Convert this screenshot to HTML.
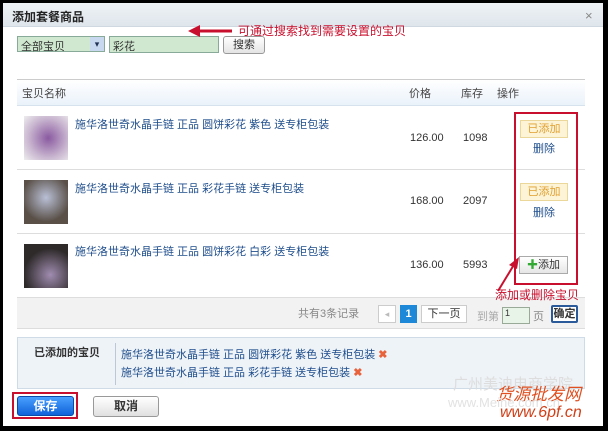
<!DOCTYPE html>
<html><head><meta charset="utf-8"><style>
*{margin:0;padding:0;box-sizing:border-box}
body{width:608px;height:431px;background:#000;position:relative;overflow:hidden;font-family:"Liberation Sans","Noto Sans CJK SC",sans-serif;font-size:11px;color:#333}
.a{position:absolute}
.lnk{color:#1f4e8c}
</style></head><body>
<div class="a" style="left:3px;top:3px;width:600px;height:423px;background:#fff"></div>
<div class="a" style="left:3px;top:3px;width:600px;height:24px;background:linear-gradient(#eef2f5,#dfe6ec);border-bottom:1px solid #cfd8e0"></div>
<div class="a" style="left:12px;top:8px;font-weight:bold;font-size:12px;color:#222">添加套餐商品</div>
<div class="a" style="left:585px;top:8px;font-size:13px;color:#888">×</div>
<!-- search -->
<div class="a" style="left:17px;top:36px;width:88px;height:16px;background:#cfe8cf;border:1px solid #8a9;"></div>
<div class="a" style="left:21px;top:38px;font-size:11px">全部宝贝</div>
<div class="a" style="left:90px;top:37px;width:14px;height:14px;background:#c8d8ef;color:#235;font-size:9px;text-align:center;line-height:14px">▾</div>
<div class="a" style="left:109px;top:36px;width:110px;height:17px;background:#cfe8cf;border:1px solid #8a9"></div>
<div class="a" style="left:113px;top:38px">彩花</div>
<div class="a" style="left:223px;top:36px;width:42px;height:18px;border:1px solid #999;border-radius:3px;background:linear-gradient(#fff,#e4e4e4);text-align:center;line-height:16px">搜索</div>
<svg class="a" style="left:188px;top:24px" width="90" height="14"><line x1="8" y1="7" x2="44" y2="7" stroke="#c8102e" stroke-width="3"/><polygon points="0,7 12,1 12,13" fill="#c8102e"/></svg>
<div class="a" style="left:238px;top:22px;color:#c8102e;font-size:12px">可通过搜索找到需要设置的宝贝</div>
<!-- table header -->
<div class="a" style="left:17px;top:79px;width:568px;height:27px;border-top:1px solid #ccc;border-bottom:1px solid #d6e2ee;background:linear-gradient(#fff,#eaf2fa)"></div>
<div class="a" style="left:22px;top:85px;color:#444">宝贝名称</div>
<div class="a" style="left:409px;top:85px;color:#444">价格</div>
<div class="a" style="left:461px;top:85px;color:#444">库存</div>
<div class="a" style="left:497px;top:85px;color:#444">操作</div>
<!-- rows -->
<div class="a" style="left:17px;top:169px;width:568px;border-top:1px solid #ddd"></div>
<div class="a" style="left:17px;top:233px;width:568px;border-top:1px solid #ddd"></div>
<div class="a" style="left:24px;top:116px;width:44px;height:44px;background:radial-gradient(circle at 55% 50%,#8a5aa0,#c9b6d0 60%,#eee)"></div>
<div class="a" style="left:24px;top:180px;width:44px;height:44px;background:radial-gradient(circle at 50% 40%,#b9c0d6,#5a5048 70%)"></div>
<div class="a" style="left:24px;top:244px;width:44px;height:44px;background:radial-gradient(circle at 60% 70%,#a08cb0,#2e2a2a 65%)"></div>
<div class="a lnk" style="left:75px;top:116px">施华洛世奇水晶手链 正品 圆饼彩花 紫色 送专柜包装</div>
<div class="a lnk" style="left:75px;top:180px">施华洛世奇水晶手链 正品 彩花手链 送专柜包装</div>
<div class="a lnk" style="left:75px;top:243px">施华洛世奇水晶手链 正品 圆饼彩花 白彩 送专柜包装</div>
<div class="a" style="left:410px;top:132px">126.00</div><div class="a" style="left:463px;top:132px">1098</div>
<div class="a" style="left:410px;top:195px">168.00</div><div class="a" style="left:463px;top:195px">2097</div>
<div class="a" style="left:410px;top:259px">136.00</div><div class="a" style="left:463px;top:259px">5993</div>
<div class="a" style="left:520px;top:120px;width:48px;height:18px;background:#fdf3d6;border:1px solid #ecd79a;color:#e0a030;text-align:center;line-height:16px">已添加</div>
<div class="a lnk" style="left:533px;top:140px">删除</div>
<div class="a" style="left:520px;top:183px;width:48px;height:18px;background:#fdf3d6;border:1px solid #ecd79a;color:#e0a030;text-align:center;line-height:16px">已添加</div>
<div class="a lnk" style="left:533px;top:204px">删除</div>
<div class="a" style="left:519px;top:256px;width:49px;height:18px;background:linear-gradient(#fff,#e6e6e6);border:1px solid #aaa;text-align:center;line-height:16px"><span style="color:#3a3">✚</span>添加</div>
<div class="a" style="left:514px;top:112px;width:64px;height:173px;border:2px solid #c8102e"></div>
<svg class="a" style="left:495px;top:255px" width="30" height="40"><line x1="3" y1="36" x2="20" y2="8" stroke="#c8102e" stroke-width="2"/><polygon points="24,2 14,10 22,14" fill="#c8102e"/></svg>
<!-- pagination -->
<div class="a" style="left:17px;top:297px;width:568px;height:32px;background:#f2f2f2;border-top:1px solid #ddd;border-bottom:1px solid #ddd"></div>
<div class="a" style="left:298px;top:305px;color:#888">共有3条记录</div>
<div class="a" style="left:378px;top:305px;width:18px;height:18px;border:1px solid #ccc;background:#fff;color:#bbb;text-align:center;line-height:16px;font-size:9px">◂</div>
<div class="a" style="left:400px;top:305px;width:17px;height:18px;background:#1e88d8;color:#fff;font-weight:bold;text-align:center;line-height:18px">1</div>
<div class="a" style="left:421px;top:305px;width:46px;height:18px;border:1px solid #ccc;background:#fff;text-align:center;line-height:16px">下一页</div>
<div class="a" style="left:477px;top:308px;color:#aaa">到第</div>
<div class="a" style="left:502px;top:307px;width:28px;height:17px;background:#e8f4e8;border:1px solid #9a9;font-size:9px;padding-left:2px">1</div>
<div class="a" style="left:533px;top:308px;color:#888">页</div>
<div class="a" style="left:551px;top:305px;width:27px;height:18px;border:2px solid #2a5a9a;border-radius:2px;background:#fff;font-weight:bold;text-align:center;line-height:14px">确定</div>
<div class="a" style="left:495px;top:286px;color:#c8102e;font-size:12px">添加或删除宝贝</div>
<!-- added -->
<div class="a" style="left:17px;top:337px;width:568px;height:52px;background:#eef3f8;border:1px solid #cfdbe6"></div>
<div class="a" style="left:115px;top:343px;height:42px;border-left:1px solid #bcc8d4"></div>
<div class="a" style="left:34px;top:344px;font-weight:bold">已添加的宝贝</div>
<div class="a lnk" style="left:121px;top:346px">施华洛世奇水晶手链 正品 圆饼彩花 紫色 送专柜包装 <span style="color:#e8623c;font-weight:bold">✖</span></div>
<div class="a lnk" style="left:121px;top:364px">施华洛世奇水晶手链 正品 彩花手链 送专柜包装 <span style="color:#e8623c;font-weight:bold">✖</span></div>
<!-- buttons -->
<div class="a" style="left:12px;top:392px;width:66px;height:27px;border:2px solid #c8102e"></div>
<div class="a" style="left:17px;top:396px;width:57px;height:20px;background:linear-gradient(#4aa0ff,#1062d8);border:1px solid #0a4aa8;border-radius:3px;color:#fff;font-weight:bold;font-size:12px;text-align:center;line-height:18px">保存</div>
<div class="a" style="left:93px;top:396px;width:66px;height:21px;background:linear-gradient(#fff,#e0e0e0);border:1px solid #999;border-radius:3px;font-weight:bold;font-size:12px;text-align:center;line-height:19px">取消</div>
<!-- watermark -->
<div class="a" style="left:453px;top:373px;color:#ddd;font-size:15px">广州美迪电商学院</div>
<div class="a" style="left:496px;top:380px;color:#e05020;font-size:17px;font-style:italic">货源批发网</div>
<div class="a" style="left:448px;top:395px;color:#e2e2e2;font-size:13px">www.Meihe.com.cn</div>
<div class="a" style="left:500px;top:404px;color:#d04018;font-size:16px;font-style:italic">www.6pf.cn</div>
</body></html>
